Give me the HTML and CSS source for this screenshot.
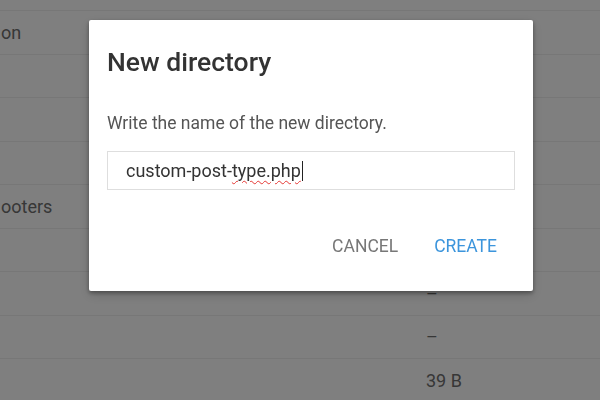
FILE: index.html
```html
<!DOCTYPE html>
<html>
<head>
<meta charset="utf-8">
<link rel="stylesheet" href="styles.css">
</head>
<body>
<div class="table">
  <div class="row head"><span class="c1"></span><span class="c2"></span></div>
  <div class="row"><span class="c1">on</span><span class="c2"></span></div>
  <div class="row"><span class="c1"></span><span class="c2"></span></div>
  <div class="row"><span class="c1"></span><span class="c2"></span></div>
  <div class="row"><span class="c1"></span><span class="c2"></span></div>
  <div class="row"><span class="c1">ooters</span><span class="c2"></span></div>
  <div class="row"><span class="c1"></span><span class="c2"></span></div>
  <div class="row"><span class="c1"></span><span class="c2">–</span></div>
  <div class="row"><span class="c1"></span><span class="c2">–</span></div>
  <div class="row"><span class="c1"></span><span class="c2">39 B</span></div>
</div>
<div class="overlay">
  <div class="dialog">
    <h2 class="title">New directory</h2>
    <p class="text">Write the name of the new directory.</p>
    <div class="field">custom-post-<span class="misspelt">type.php</span><span class="caret"></span></div>
    <div class="actions">
      <button class="btn cancel">CANCEL</button>
      <button class="btn create">CREATE</button>
    </div>
  </div>
</div>
</body>
</html>
```

FILE: styles.css
```css
html, body {
  margin: 0;
  padding: 0;
  width: 600px;
  height: 400px;
  overflow: hidden;
  background: #fff;
  font-family: Roboto, "Liberation Sans", sans-serif;
}
.table {
  margin-top: -32.5px;
}
.row {
  display: flex;
  align-items: center;
  height: 43.5px;
  box-sizing: border-box;
  border-bottom: 1px solid #eeeeee;
  font-size: 18px;
  color: #6e6e6e;
}
.c1 {
  width: 425px;
  padding-left: 1px;
}
.c2 {
  flex: 1;
}
.overlay {
  position: fixed;
  inset: 0;
  background: rgba(0, 0, 0, 0.5);
}
.dialog {
  position: absolute;
  left: 89px;
  top: 20px;
  width: 444px;
  height: 271px;
  box-sizing: border-box;
  padding: 26px 18px 0;
  background: #fff;
  border-radius: 2px;
  box-shadow: 0 2px 4px rgba(0, 0, 0, 0.35), 0 4px 12px rgba(0, 0, 0, 0.15);
  display: flex;
  flex-direction: column;
}
.title {
  margin: 0;
  font-size: 26.5px;
  line-height: 32px;
  font-weight: 500;
  color: #333;
}
.text {
  margin: 33px 0 0;
  font-size: 17.5px;
  line-height: 24px;
  color: #555;
}
.field {
  margin-top: 16px;
  height: 39px;
  box-sizing: border-box;
  border: 1px solid #dedede;
  padding-left: 18px;
  display: flex;
  align-items: center;
  font-size: 18px;
  color: #333;
}
.misspelt {
  text-decoration: underline wavy #e53935;
  text-decoration-thickness: 1px;
  text-underline-offset: 3px;
}
.caret {
  display: inline-block;
  width: 0;
  height: 20px;
  border-left: 1px solid #222;
  margin-left: 1px;
}
.actions {
  margin-top: 38px;
  display: flex;
  justify-content: flex-end;
}
.btn {
  font-family: Roboto, "Liberation Sans", sans-serif;
  font-size: 17.5px;
  height: 36px;
  margin: 0;
  padding: 0 18px;
  border: 0;
  background: transparent;
}
.cancel {
  color: #777;
}
.create {
  color: #3c95dc;
}
```
